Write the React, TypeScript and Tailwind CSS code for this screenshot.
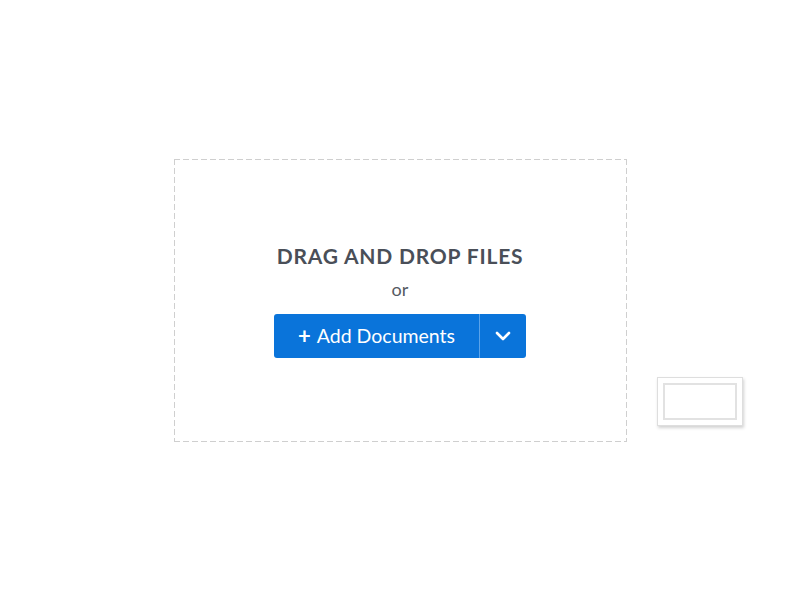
export default function App() {
  return (
    <div className="relative flex h-[600px] w-[800px] items-center justify-center bg-white font-['Lato',sans-serif]">
      <div className="flex h-[283px] w-[453px] flex-col items-center justify-center bg-no-repeat pt-[3px] [background-image:repeating-linear-gradient(90deg,#cfcfcf_0_6px,transparent_6px_9px),repeating-linear-gradient(90deg,#cfcfcf_0_6px,transparent_6px_9px),repeating-linear-gradient(180deg,#cfcfcf_0_6px,transparent_6px_9px),repeating-linear-gradient(180deg,#cfcfcf_0_6px,transparent_6px_9px)] [background-position:0_0,0_100%,0_0,100%_0] [background-size:100%_1px,100%_1px,1px_100%,1px_100%]">
        <h2 className="text-[21px] font-bold uppercase leading-none tracking-[0.8px] text-[#4a4f58]">Drag and drop files</h2>
        <p className="mt-[14px] text-[18px] leading-none text-[#555a63]">or</p>
        <div className="mt-[16px] flex h-[44px] overflow-hidden rounded-[3px] bg-[#0a74da]">
          <button className="flex h-full w-[205px] items-center justify-center text-[19.5px] text-white">
            <span className="mr-[6px] text-[22px] font-bold leading-none">+</span>Add Documents
          </button>
          <div className="w-px bg-[#5aa3ea]" />
          <button className="flex h-full w-[46px] items-center justify-center text-white">
            <svg width="16" height="10" viewBox="0 0 16 10" fill="none">
              <path d="M2 2l6 6 6-6" stroke="white" strokeWidth="2.6" strokeLinecap="round" strokeLinejoin="round" />
            </svg>
          </button>
        </div>
      </div>
      <div className="absolute left-[657px] top-[377px] h-[49px] w-[86px] border border-[#dedede] bg-white p-[5px] shadow-[1px_2px_3px_rgba(0,0,0,0.18)]">
        <div className="h-full w-full border-2 border-[#e2e2e2]" />
      </div>
    </div>
  );
}
